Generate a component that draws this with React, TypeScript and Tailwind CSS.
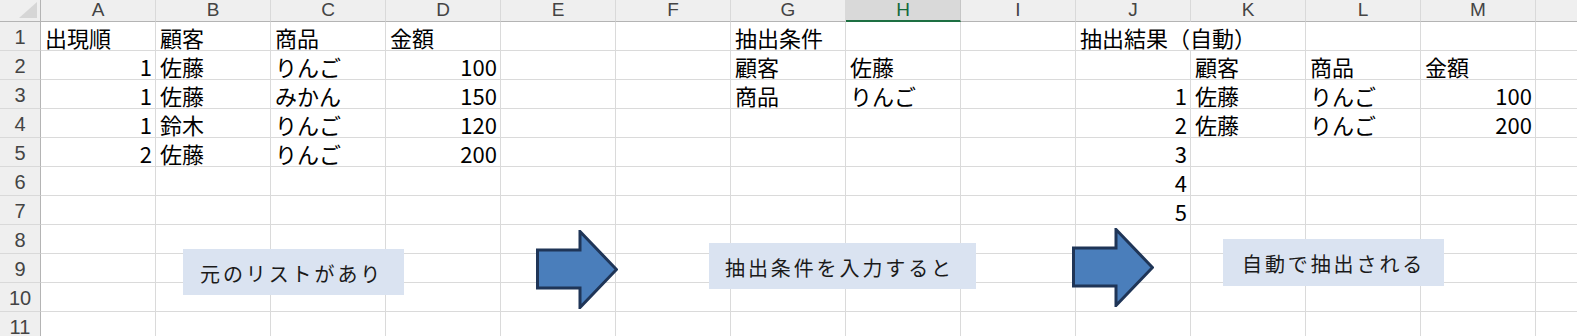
type Cell = { v: string; num?: boolean; spill?: boolean };

const COLS = ["A", "B", "C", "D", "E", "F", "G", "H", "I", "J", "K", "L", "M"];
const ROWS = [1, 2, 3, 4, 5, 6, 7, 8, 9, 10, 11];

const cells: Record<string, Cell> = {
  A1: { v: "出現順" },
  B1: { v: "顧客" },
  C1: { v: "商品" },
  D1: { v: "金額" },
  G1: { v: "抽出条件" },
  J1: { v: "抽出結果（自動）", spill: true },
  A2: { v: "1", num: true },
  B2: { v: "佐藤" },
  C2: { v: "りんご" },
  D2: { v: "100", num: true },
  G2: { v: "顧客" },
  H2: { v: "佐藤" },
  K2: { v: "顧客" },
  L2: { v: "商品" },
  M2: { v: "金額" },
  A3: { v: "1", num: true },
  B3: { v: "佐藤" },
  C3: { v: "みかん" },
  D3: { v: "150", num: true },
  G3: { v: "商品" },
  H3: { v: "りんご" },
  J3: { v: "1", num: true },
  K3: { v: "佐藤" },
  L3: { v: "りんご" },
  M3: { v: "100", num: true },
  A4: { v: "1", num: true },
  B4: { v: "鈴木" },
  C4: { v: "りんご" },
  D4: { v: "120", num: true },
  J4: { v: "2", num: true },
  K4: { v: "佐藤" },
  L4: { v: "りんご" },
  M4: { v: "200", num: true },
  A5: { v: "2", num: true },
  B5: { v: "佐藤" },
  C5: { v: "りんご" },
  D5: { v: "200", num: true },
  J5: { v: "3", num: true },
  J6: { v: "4", num: true },
  J7: { v: "5", num: true },
};

// block arrow shape drawn over the sheet
function Arrow({ className }: { className: string }) {
  return (
    <svg className={className} width="82" height="79" viewBox="0 0 82 79">
      <polygon
        points="1.5,20 44,20 44,1.5 80.5,39.5 44,77.5 44,58 1.5,58"
        fill="#4a7ebb"
        stroke="#1f3557"
        strokeWidth="3"
        strokeLinejoin="miter"
      />
    </svg>
  );
}

// floating text box shape
function Note({ text, className }: { text: string; className: string }) {
  return (
    <div
      className={`absolute flex items-center bg-[#dae3f1] pt-[3px] text-[20px] tracking-[2.9px] text-[#1a1a1a] ${className}`}
    >
      {text}
    </div>
  );
}

export default function App() {
  return (
    <div className="relative h-[336px] w-[1577px] overflow-hidden bg-white font-['Noto_Sans_CJK_JP',sans-serif] text-black">
      <div className="grid grid-cols-[41px_repeat(13,115px)_1fr] grid-rows-[22px_repeat(11,29px)]">
        {/* corner */}
        <div className="relative border-r border-b border-[#b4b4b4] bg-[#efefef]">
          <svg className="absolute right-[3px] bottom-[3px]" width="18" height="16" viewBox="0 0 18 16">
            <polygon points="18,0 18,16 0,16" fill="#d6d6d6" />
          </svg>
        </div>
        {COLS.map((c) => (
          <div
            key={c}
            className={
              c === "H"
                ? "flex items-center justify-center border-r border-b-2 border-r-[#c6c6c6] border-b-[#1d6f42] bg-[#d9d9d9] font-['Liberation_Sans',Arial,sans-serif] text-[19px] text-[#14693a]"
                : "flex items-center justify-center border-r border-b border-r-[#d9d9d9] border-b-[#b4b4b4] bg-[#efefef] font-['Liberation_Sans',Arial,sans-serif] text-[19px] text-[#444]"
            }
          >
            {c}
          </div>
        ))}
        <div className="border-b border-[#b4b4b4] bg-[#efefef]" />

        {ROWS.map((r) => (
          <div key={r} className="contents">
            <div className="flex items-center justify-center border-r border-b border-r-[#b4b4b4] border-b-[#d9d9d9] bg-[#efefef] pt-[1px] font-['Liberation_Sans',Arial,sans-serif] text-[20px] text-[#444]">
              {r}
            </div>
            {COLS.map((c) => {
              const cell = cells[c + r];
              return (
                <div
                  key={c}
                  className={`relative flex items-center border-b border-[#dadada] pt-[2px] text-[22px] leading-[26px] whitespace-nowrap ${
                    cell?.spill ? "z-10" : "border-r"
                  } ${cell?.num ? "justify-end pr-[3px]" : "pl-[4px]"}`}
                >
                  {cell?.v}
                </div>
              );
            })}
            <div className="border-b border-[#dadada]" />
          </div>
        ))}
      </div>

      <Note text="元のリストがあり" className="top-[249px] left-[183px] h-[46px] w-[221px] pl-[17px]" />
      <Note text="抽出条件を入力すると" className="top-[243px] left-[709px] h-[46px] w-[267px] pl-[16px]" />
      <Note text="自動で抽出される" className="top-[239px] left-[1223px] h-[47px] w-[221px] pl-[19px]" />

      <Arrow className="absolute top-[230px] left-[536px]" />
      <Arrow className="absolute top-[228px] left-[1072px]" />
    </div>
  );
}
